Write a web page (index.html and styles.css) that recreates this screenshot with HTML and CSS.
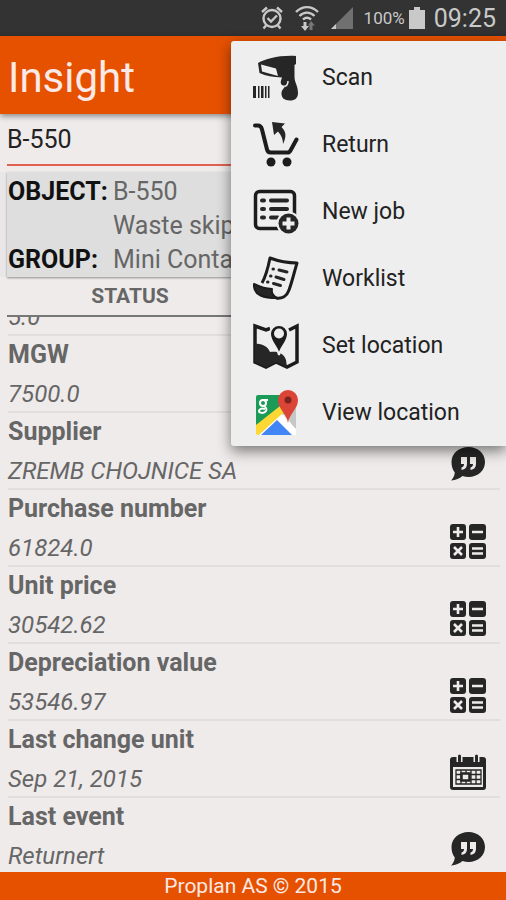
FILE: index.html
```html
<!DOCTYPE html>
<html lang="en">
<head>
<meta charset="utf-8">
<meta name="viewport" content="width=device-width, initial-scale=1">
<title>Insight</title>
<link rel="stylesheet" href="styles.css">
</head>
<body>
<svg class="defs" aria-hidden="true">
  <symbol id="quote" viewBox="0 0 36 36">
    <path fill="#262626" d="M18.500 1C28 1 35 7.500 35 16s-7 15-16.500 15c-2 0-4-.3-6-1-3 2.500-6.500 4-11.500 4.500 2-2 3.500-4.500 3.800-8C2.500 23.500 1.500 20 1.500 16 1.500 7.500 9 1 18.500 1z"/>
    <path fill="#efebeb" d="M11 11h6v7c0 3.500-2 5.500-5.500 6v-2.500c1.800-.4 2.500-1.500 2.500-3.500h-3zM20 11h6v7c0 3.500-2 5.500-5.500 6v-2.500c1.800-.4 2.500-1.500 2.500-3.500h-3z"/>
  </symbol>
  <symbol id="calc" viewBox="0 0 36 36">
    <g fill="#262626"><rect x="0" y="1" width="16" height="16" rx="3"/><rect x="19" y="1" width="17" height="16" rx="3"/><rect x="0" y="20" width="16" height="16" rx="3"/><rect x="19" y="20" width="17" height="16" rx="3"/></g>
    <path fill="none" stroke="#efebeb" stroke-width="2.600" d="M8 4v10M3 9h10M22 9h11M4 24l8 8M12 24l-8 8M22 25.500h11M22 30.500h11"/>
  </symbol>
  <symbol id="calendar" viewBox="0 0 36 36">
    <path fill="#262626" d="M3 3h30a3 3 0 0 1 3 3v27a3 3 0 0 1-3 3H3a3 3 0 0 1-3-3V6a3 3 0 0 1 3-3z"/>
    <path fill="#efebeb" d="M3 13h30v20H3z"/>
    <path stroke="#efebeb" stroke-width="6" d="M9.500 0v8M26.500 0v8"/>
    <path stroke="#262626" stroke-width="3" stroke-linecap="round" d="M9.500 2v5M26.500 2v5"/>
    <path fill="none" stroke="#262626" stroke-width="1.300" d="M6 16h25v14H6zM6 20.500h25M6 25.500h25M11 16v14M16 16v14M21 16v14M26 16v14"/>
    <rect x="11.500" y="19.500" width="8" height="7" fill="#efebeb" stroke="#262626" stroke-width="2.500"/>
  </symbol>
</svg>

<div class="app">
  <div class="status">
    <svg class="alarm" viewBox="0 0 22 24" fill="none" stroke="#c9c9c9" stroke-width="2.400">
      <circle cx="11" cy="12.500" r="8.500"/><path d="M6.500 12l3.500 3.500 6-6M1 6l5-4.500M21 6l-5-4.500M5 19.500L2.500 22.500M17 19.500l2.500 3"/>
    </svg>
    <svg class="wifi" viewBox="0 0 24 26" fill="none" stroke="#c9c9c9" stroke-width="2.400">
      <path d="M1 7c6.500-6.500 15.500-6.500 22 0M4.500 11c4.500-4.500 10.500-4.500 15 0M8 14.500c2.500-2.300 5.500-2.300 8 0"/>
      <path fill="#c9c9c9" stroke="none" d="M8.500 17h3v4H14l-4 5-4-5h2.500z"/><path fill="#777" stroke="none" d="M14.500 25h3v-4.500H20L16 16l-3 4.500h1.500z"/>
    </svg>
    <svg class="signal" viewBox="0 0 24 24"><path fill="#707070" d="M23 1v22H1z"/><path fill="#c9c9c9" d="M6 18v5H1z"/></svg>
    <span class="percent">100%</span>
    <svg class="battery" viewBox="0 0 16 24"><path fill="#c9c9c9" d="M5 1h6v3h5v19H0V4h5z"/></svg>
    <time class="clock">09:25</time>
  </div>

  <header class="bar"><h1>Insight</h1></header>

  <main>
    <div class="search"><input type="text" value="B-550" aria-label="Object number"></div>

    <section class="object-wrap">
      <dl class="object">
        <dt>OBJECT:</dt><dd>B-550</dd>
        <dd class="second">Waste skip</dd>
        <dt>GROUP:</dt><dd>Mini Container</dd>
      </dl>
    </section>

    <nav class="tabs"><button type="button">STATUS</button></nav>

    <div class="list">
      <ul>
        <li><div><p>5.0</p></div></li>
        <li><div><h2>MGW</h2><p>7500.0</p></div></li>
        <li><div><h2>Supplier</h2><p>ZREMB CHOJNICE SA</p></div><svg><use href="#quote"/></svg></li>
        <li><div><h2>Purchase number</h2><p>61824.0</p></div><svg><use href="#calc"/></svg></li>
        <li><div><h2>Unit price</h2><p>30542.62</p></div><svg><use href="#calc"/></svg></li>
        <li><div><h2>Depreciation value</h2><p>53546.97</p></div><svg><use href="#calc"/></svg></li>
        <li><div><h2>Last change unit</h2><p>Sep 21, 2015</p></div><svg><use href="#calendar"/></svg></li>
        <li><div><h2>Last event</h2><p>Returnert</p></div><svg><use href="#quote"/></svg></li>
      </ul>
    </div>
  </main>

  <footer>Proplan AS © 2015</footer>

  <div class="menu" role="menu">
    <button type="button" role="menuitem">
      <svg viewBox="0 0 48 48">
        <path fill="#262626" d="M5 9C13 5 26 1 43 2v8l-1.500 1v12c0 5 3.500 9 3.500 16 0 5-3 7.500-8 7.500-6 0-9-3-8.500-8 .3-3 3-4 3.500-7-3 .5-5-1.500-4-5l1-3C20 23 13 22 6.500 19z"/>
        <path fill="#eee" d="M8 10.500l15 4 2 7.500L9 17.500z"/>
        <path fill="none" stroke="#eee" stroke-width="1.500" d="M35 27c0 3-1 5-3.500 5.500"/>
        <path fill="#262626" d="M0 32h3v12H0zM5 32h1.500v12H5zM8 32h2.500v12H8zM12 32h1.500v12H12zM15 32h1.500v12H15z"/>
      </svg>Scan</button>
    <button type="button" role="menuitem">
      <svg viewBox="0 0 48 48">
        <path fill="none" stroke="#1c1c1c" stroke-width="4" stroke-linecap="round" stroke-linejoin="round" d="M2 4.500h3q3 0 4 4l5 20q.8 3 3.500 3h17q2 0 3-2l6-11"/>
        <circle cx="18" cy="41" r="4.500" fill="#1c1c1c"/><circle cx="34" cy="41" r="4.500" fill="#1c1c1c"/>
        <path fill="#262626" d="M19 1l13 1.500-3.500 3.500c5 5 5 10 1.500 17 0-5-1.500-8.500-5-12.500L21 14z"/>
      </svg>Return</button>
    <button type="button" role="menuitem">
      <svg viewBox="0 0 48 48">
        <rect x="2.500" y="3.500" width="39" height="37" rx="4" fill="none" stroke="#1c1c1c" stroke-width="3.500"/>
        <path stroke="#262626" stroke-width="4" stroke-linecap="round" d="M9 12.500h2M9 21h2M9 29.500h2M18 12.500h16M18 21h16M18 29.500h7"/>
        <circle cx="35.500" cy="35.500" r="12" fill="#eee"/><circle cx="35.500" cy="35.500" r="10" fill="#262626"/>
        <path stroke="#eee" stroke-width="4" d="M35.500 29.500v12M29.500 35.500h12"/>
      </svg>New job</button>
    <button type="button" role="menuitem">
      <svg viewBox="0 0 48 48">
        <path fill="none" stroke="#1c1c1c" stroke-width="3" stroke-linejoin="round" d="M9 28C13 21 15 13 17 3c8 3 18 5 27 5-3 10-5 19-8 27-2 6-7 9-13 8"/>
        <path fill="#262626" stroke="#1c1c1c" stroke-width="2" stroke-linejoin="round" d="M1 29c6 3 13 5 18 5-1 4 2 8 5 9C12 43 0 41 1 29z"/>
        <path fill="none" stroke="#262626" stroke-width="3" stroke-linecap="round" d="M20 14h.5M26 15l8 2M17.500 21h.5M23 22l8 2.500M14.500 27h.5M20.500 28.500l7 2"/>
      </svg>Worklist</button>
    <button type="button" role="menuitem">
      <svg viewBox="0 0 48 48">
        <path fill="none" stroke="#1c1c1c" stroke-width="3.500" d="M17 6.500l-4 1.500L2 4v36l11 5 10-5 11 5 10-5V4l-8 4"/>
        <path fill="#262626" d="M2 22c7-1 13 3 15 8 7-1 14 1 16 8l1 7-11-5-10 5-11-5z"/>
        <path fill="#1c1c1c" stroke="#eee" stroke-width="2" d="M26 33c-1.500-8-9-13-9-21a9 9 0 0 1 18 0c0 8-7.500 13-9 21z"/>
        <circle cx="26" cy="11.500" r="5" fill="#eee"/>
      </svg>Set location</button>
    <button type="button" role="menuitem">
      <svg viewBox="0 0 48 48">
        <path fill="#ddd" d="M5 6h36a2 2 0 0 1 2 2v36a2 2 0 0 1-2 2H5z"/>
        <path fill="#c6c6c6" d="M35 28l8-10v26z"/>
        <path fill="#1c9a57" d="M5 6h30v16L3 41V8a2 2 0 0 1 2-2z"/>
        <path fill="#fdd835" d="M3 36l24-19 5 6L6 46H5a2 2 0 0 1-2-2z"/>
        <path fill="#fff" d="M6 46l23-21 14 15v6z"/>
        <path fill="#4285f4" d="M8 46l16-15 15 15z"/>
        <g fill="none" stroke="#fff" stroke-width="2"><circle cx="10" cy="14" r="3"/><path d="M10 11h5M11 17c3 2 3 3 2 5-2 3-7 2-7 0s3-3 6-2"/></g>
        <path fill="#db4437" d="M35 34c-1-9-10-14-10-23a10 10 0 0 1 20 0c0 9-9 14-10 23z"/>
        <circle cx="35" cy="11" r="3.500" fill="#7b231c"/>
      </svg>View location</button>
  </div>
</div>
</body>
</html>
```
FILE: styles.css
```css
* { box-sizing: border-box; }

body {
  margin: 0;
  font-family: Roboto, "Liberation Sans", sans-serif;
  font-size: 24px;
  background: #efebeb;
  color: #666;
}

h1, h2, p, dl, dd, ul { margin: 0; padding: 0; }
button, input { font: inherit; border: 0; background: none; }
.defs { position: absolute; width: 0; height: 0; }

.app {
  position: relative;
  display: flex;
  flex-direction: column;
  height: 100vh;
  overflow: hidden;
}

.status {
  display: flex;
  flex: none;
  align-items: center;
  justify-content: flex-end;
  height: 36px;
  padding-right: 10px;
  background: #333;
  color: #c9c9c9;
}
.alarm { width: 22px; height: 24px; margin-right: 12px; }
.wifi { width: 24px; height: 26px; margin-right: 11px; }
.signal { width: 24px; height: 24px; margin-right: 10px; }
.battery { width: 16px; height: 24px; margin: 0 9px 0 4px; }
.percent { font-size: 17px; }
.clock { font-size: 25px; }

.bar {
  z-index: 1;
  display: flex;
  flex: none;
  align-items: center;
  height: 78px;
  padding: 4px 8px 0;
  background: #e65100;
  color: #fbe9e7;
  box-shadow: 0 2px 6px rgba(0, 0, 0, 0.45);
}
h1 { font-size: 42px; font-weight: 400; }

main {
  display: flex;
  flex: 1;
  flex-direction: column;
  min-height: 0;
}

.search { padding: 0 7px; }
.search input {
  width: 100%;
  height: 52px;
  padding: 0;
  border-bottom: 2px solid #e0614f;
  color: #222;
  font-size: 25px;
}

.object-wrap {
  margin-top: 6px;
  padding: 0 7px;
  background: #e8e6e6;
}
.object {
  display: grid;
  grid-template-columns: 105px 1fr;
  padding: 3px 1px 0;
  background: #dedede;
  box-shadow: 0 1px 2px rgba(0, 0, 0, 0.4);
  font-size: 25px;
  line-height: 34px;
}
.object dt { color: #111; font-weight: 700; }
.object .second { grid-column: 2; }

.tabs {
  display: flex;
  margin: 0 7px;
  border-bottom: 2px solid #777;
}
.tabs button {
  flex: 0 0 50%;
  height: 38px;
  color: #666;
  font-size: 21px;
  font-weight: 700;
}

.list { flex: 1; min-height: 0; padding: 0 6px 0 8px; overflow: hidden; }
.list ul { margin-top: -28px; list-style: none; }
.list li {
  display: flex;
  align-items: flex-end;
  justify-content: space-between;
  padding: 4px 14px 1px 0;
  border-bottom: 2px solid #e2dede;
}
.list h2 { font-size: 25px; font-weight: 700; line-height: 30px; }
.list p { padding-top: 8px; font-style: italic; line-height: 32px; }
.list svg { width: 36px; height: 38px; margin-bottom: 4px; }

footer {
  flex: none;
  background: #e65100;
  color: #fbe9e7;
  font-size: 21px;
  line-height: 28px;
  text-align: center;
}

.menu {
  position: absolute;
  z-index: 2;
  top: 41px;
  right: 0;
  display: flex;
  flex-direction: column;
  width: 275px;
  padding: 3px 0 0;
  border-radius: 3px 0 0 3px;
  background: #eee;
  box-shadow: 0 5px 14px rgba(0, 0, 0, 0.5);
}
.menu button {
  display: flex;
  align-items: center;
  gap: 21px;
  height: 67px;
  padding: 0 22px;
  color: #222;
  font-size: 23px;
}
.menu svg { flex: none; width: 48px; height: 48px; }
```
